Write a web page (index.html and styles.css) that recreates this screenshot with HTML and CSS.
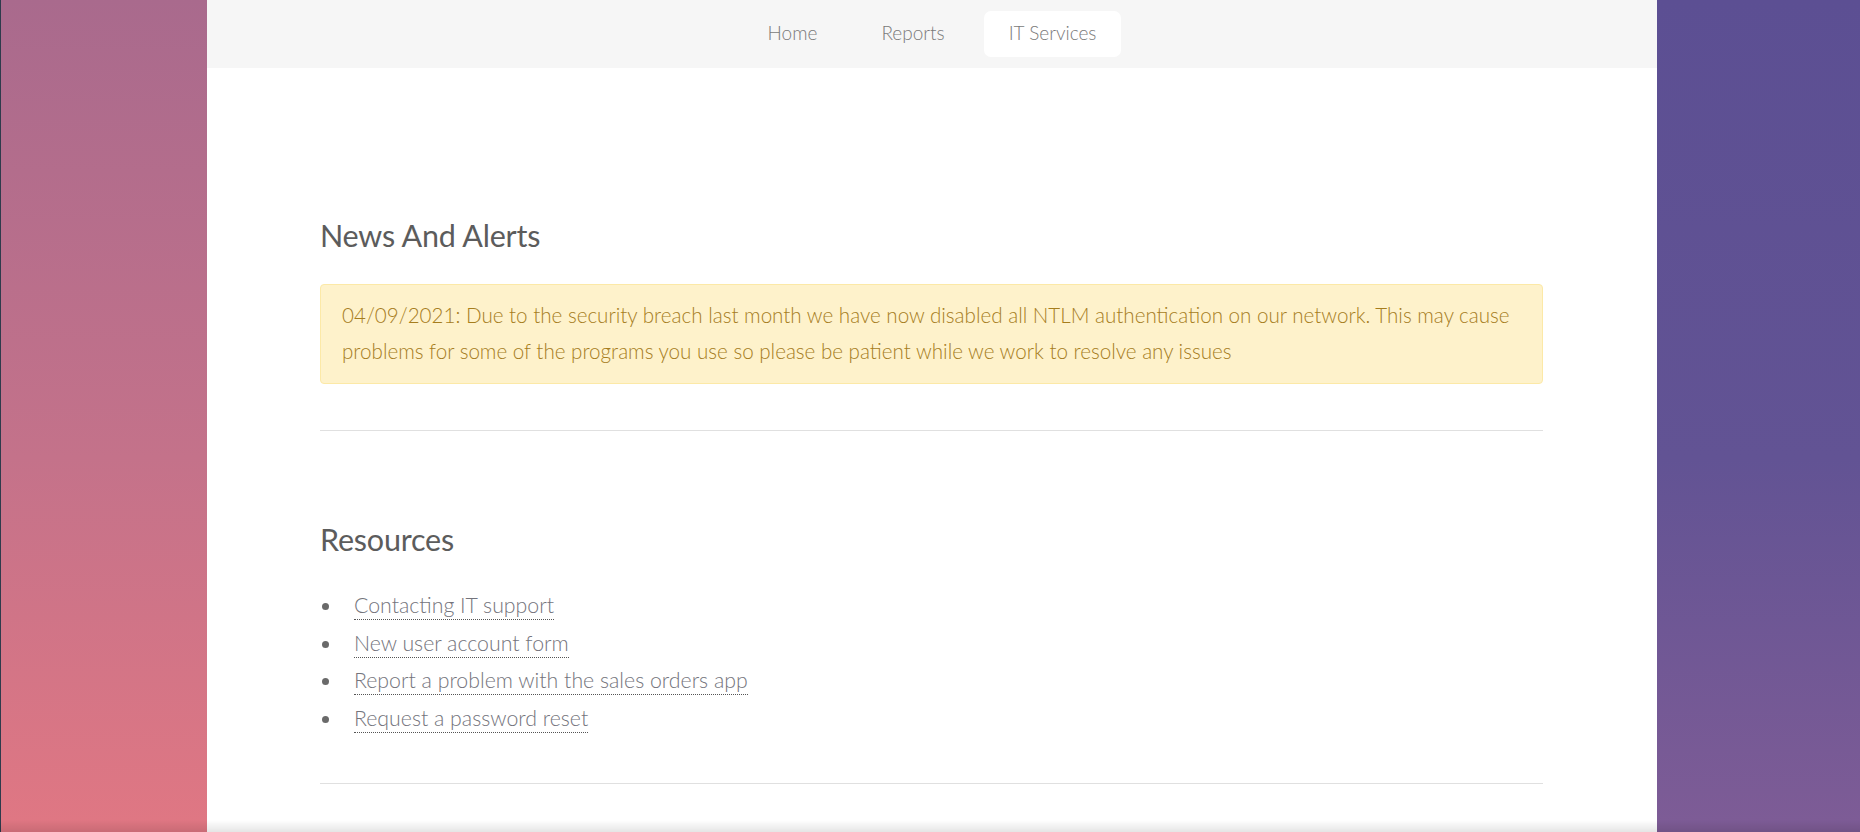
FILE: index.html
```html
<!DOCTYPE html>
<html lang="en">
<head>
<meta charset="utf-8">
<title>IT Services</title>
<link rel="stylesheet" href="styles.css">
</head>
<body>
<div class="page">
  <nav class="nav">
    <a class="nav-item" href="#">Home</a>
    <a class="nav-item" href="#">Reports</a>
    <a class="nav-item active" href="#">IT Services</a>
  </nav>
  <main class="main">
    <section class="section first">
      <h2 class="title">News And Alerts</h2>
      <div class="alert">04/09/2021: Due to the security breach last month we have now disabled all NTLM authentication on our network. This may cause problems for some of the programs you use so please be patient while we work to resolve any issues</div>
    </section>
    <hr class="rule">
    <section class="section">
      <h2 class="title">Resources</h2>
      <ul class="links">
        <li><a href="#">Contacting IT support</a></li>
        <li><a href="#">New user account form</a></li>
        <li><a href="#">Report a problem with the sales orders app</a></li>
        <li><a href="#">Request a password reset</a></li>
      </ul>
    </section>
    <hr class="rule end">
  </main>
</div>
<div class="bottom-shade"></div>
</body>
</html>
```
FILE: styles.css
```css
html, body {
  margin: 0;
  padding: 0;
  height: 100%;
}
body {
  border-left: 1px solid #2e3b4c;
  background-color: #8a6290;
  background-image:
    linear-gradient(to bottom, #a96a8d 0%, #c4728a 55%, #e07783 100%),
    linear-gradient(to bottom, #5c4f93 0%, #625394 55%, #7e5c96 100%);
  background-size: 50% 100%, 50% 100%;
  background-position: left top, right top;
  background-repeat: no-repeat;
  font-family: "Lato", "Open Sans", sans-serif;
  font-weight: 300;
  color: #666;
  overflow: hidden;
}
.page {
  margin-left: 206px;
  width: 1450px;
  min-height: 100%;
  background: #fff;
}
.nav {
  height: 68px;
  box-sizing: border-box;
  padding-top: 11px;
  background: #f6f6f6;
  display: flex;
  justify-content: center;
  align-items: flex-start;
  gap: 14px;
}
.nav-item {
  display: block;
  height: 46px;
  line-height: 44px;
  padding: 0 25px;
  border-radius: 7px;
  font-size: 19px;
  font-weight: 300;
  color: #7a7a7a;
  text-decoration: none;
}
.nav-item.active {
  background: #fff;
}
.main {
  padding: 0 114px 0 113px;
}
.section {
  padding-top: 91px;
}
.section.first {
  padding-top: 150px;
}
.title {
  margin: 0 0 32px;
  font-size: 30.5px;
  line-height: 34px;
  font-weight: 400;
  color: #5c5c5c;
  letter-spacing: -0.2px;
}
.alert {
  border: 1px solid #fce9a7;
  background: #fef2cb;
  border-radius: 4px;
  padding: 12px 21px 14px;
  font-size: 20.6px;
  line-height: 36px;
  color: #a67d1d;
}
.rule {
  margin: 46px 0 0;
  border: 0;
  border-top: 1px solid #e0e0e0;
  height: 0;
}
.rule.end {
  margin-top: 45px;
}
.links {
  list-style: none;
  margin: 4px 0 0;
  padding: 0;
}
.links li {
  display: flex;
  align-items: center;
  height: 37.5px;
  font-size: 21.3px;
}
.links li::before {
  content: "";
  width: 7px;
  height: 7px;
  border-radius: 50%;
  background: #6a6a6a;
  margin-left: 2px;
  margin-right: 25px;
  flex: none;
}
.links a {
  color: #74747c;
  text-decoration: none;
  border-bottom: 1px dotted #555;
  line-height: 1.2;
}
.bottom-shade {
  position: fixed;
  left: 0;
  right: 0;
  bottom: 0;
  height: 12px;
  background: linear-gradient(to bottom, rgba(0,0,0,0), rgba(0,0,0,0.1));
  pointer-events: none;
}
```
